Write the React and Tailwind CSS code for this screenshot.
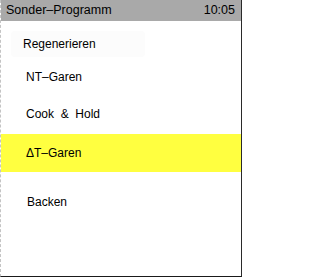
import React from 'react';

const ITEMS = [
  { label: 'NT–Garen', className: 'mt-[7px] h-[26px] pl-[25px]' },
  { label: 'Cook  &  Hold', className: 'mt-[11px] h-[26px] pl-[25px]' },
  { label: 'ΔT–Garen', className: 'mt-[7px] h-[38px] pl-[25px] bg-[#ffff40]' },
  { label: 'Backen', className: 'mt-[16px] h-[27px] pl-[26px]' },
];

const App = () => {
  return (
    <div
      className="flex h-[277px] w-[242px] flex-col overflow-hidden border-b border-l border-r border-b-[#1a1a1a] border-l-[#c4c4c4] border-r-[#2a2a2a] bg-white text-[12px] text-black [border-left-style:dashed] [font-family:'Liberation_Sans',Arial,sans-serif]"
    >
      {/* Header */}
      <div className="flex h-[21px] shrink-0 items-center justify-between bg-[#a9a9a9] pl-[5px] pr-[6px] text-[12.5px]">
        <span>Sonder–Programm</span>
        <span>10:05</span>
      </div>

      {/* Menu */}
      <div className="mt-[10px] flex h-[26px] items-center pl-[10px]">
        <div className="flex h-full w-[134px] items-center rounded-sm bg-[#fcfcfc] pl-[12px]">
          Regenerieren
        </div>
      </div>

      {ITEMS.map((item) => (
        <div key={item.label} className={`flex shrink-0 items-center whitespace-pre ${item.className}`}>
          {item.label}
        </div>
      ))}
    </div>
  );
};

export default App;
